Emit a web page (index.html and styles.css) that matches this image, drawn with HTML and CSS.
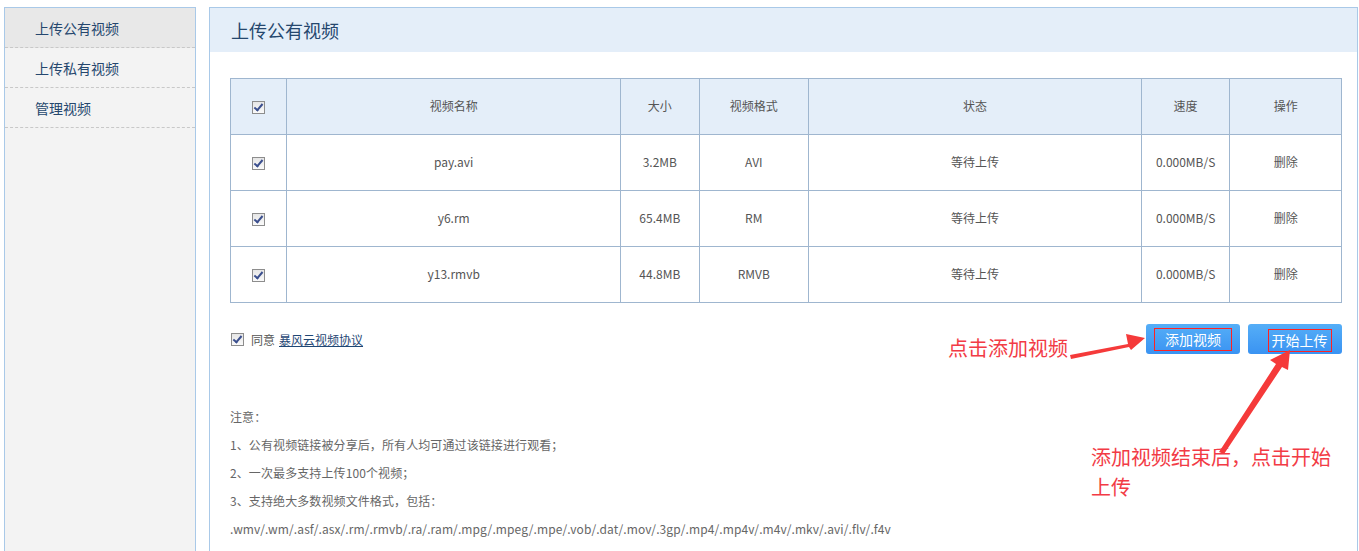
FILE: index.html
```html
<!DOCTYPE html>
<html lang="zh-CN">
<head>
    <meta charset="UTF-8">
    <title>上传公有视频</title>
    <link rel="stylesheet" href="styles.css">
</head>
<body>

<div class="page">

    <!-- Sidebar -->
    <div class="sidebar">
        <a class="active" href="#">上传公有视频</a>
        <a href="#">上传私有视频</a>
        <a href="#">管理视频</a>
    </div>

    <!-- Main panel -->
    <div class="main">
        <div class="main-head">上传公有视频</div>

        <div class="main-body">
            <table class="video-table">
                <tr>
                    <th class="col-check"><span class="check"></span></th>
                    <th class="col-name">视频名称</th>
                    <th class="col-size">大小</th>
                    <th class="col-format">视频格式</th>
                    <th class="col-state">状态</th>
                    <th class="col-speed">速度</th>
                    <th class="col-op">操作</th>
                </tr>
                <tr>
                    <td><span class="check"></span></td>
                    <td>pay.avi</td>
                    <td>3.2MB</td>
                    <td>AVI</td>
                    <td>等待上传</td>
                    <td>0.000MB/S</td>
                    <td>删除</td>
                </tr>
                <tr>
                    <td><span class="check"></span></td>
                    <td>y6.rm</td>
                    <td>65.4MB</td>
                    <td>RM</td>
                    <td>等待上传</td>
                    <td>0.000MB/S</td>
                    <td>删除</td>
                </tr>
                <tr>
                    <td><span class="check"></span></td>
                    <td>y13.rmvb</td>
                    <td>44.8MB</td>
                    <td>RMVB</td>
                    <td>等待上传</td>
                    <td>0.000MB/S</td>
                    <td>删除</td>
                </tr>
            </table>

            <div class="actions">
                <div class="agree">
                    <span class="check"></span>
                    <span>同意</span>
                    <a href="#">暴风云视频协议</a>
                </div>
                <div class="buttons">
                    <button class="btn"><span class="mark">添加视频</span></button>
                    <button class="btn"><span class="mark mark-tight">开始上传</span></button>
                </div>
            </div>

            <div class="notes">
                <p>注意：</p>
                <p>1、公有视频链接被分享后，所有人均可通过该链接进行观看；</p>
                <p>2、一次最多支持上传100个视频；</p>
                <p>3、支持绝大多数视频文件格式，包括：</p>
                <p>.wmv/.wm/.asf/.asx/.rm/.rmvb/.ra/.ram/.mpg/.mpeg/.mpe/.vob/.dat/.mov/.3gp/.mp4/.mp4v/.m4v/.mkv/.avi/.flv/.f4v</p>
            </div>
        </div>
    </div>
</div>

<!-- red annotations drawn over the screenshot -->
<svg class="arrows" width="1359" height="551" viewBox="0 0 1359 551">
    <polygon fill="#f53a3a" points="1070,355 1128,344 1126,334 1145,338 1131,350 1129,347 1071,359"/>
    <polygon fill="#f53a3a" points="1219,452 1276,364 1270,360 1290,350 1288,370 1282,367 1224,454"/>
</svg>
<div class="note-a">点击添加视频</div>
<div class="note-b">添加视频结束后，点击开始上传</div>

</body>
</html>
```

FILE: styles.css
```css
body, html {
    margin: 0;
    height: 100%;
    overflow: hidden;
    background-color: #fff;
    font-family: "Noto Sans CJK SC", "Liberation Sans", sans-serif;
    color: #555;
}

.page {
    display: flex;
    gap: 13px;
    height: 100%;
    box-sizing: border-box;
    padding: 7px 1px 0 4px;
}

/* Sidebar */
.sidebar {
    width: 192px;
    box-sizing: border-box;
    background-color: #f3f3f3;
    border: 1px solid #a9c9e8;
    border-bottom: none;
}

.sidebar a {
    display: block;
    height: 39px;
    line-height: 41px;
    padding-left: 30px;
    font-size: 14px;
    color: #25476e;
    text-decoration: none;
    border-bottom: 1px dashed #c8c8c8;
}

.sidebar a.active {
    background-color: #e8e8e8;
}

/* Main panel */
.main {
    flex: 1;
    border: 1px solid #a9c9e8;
    border-bottom: none;
}

.main-head {
    height: 44px;
    line-height: 44px;
    padding-left: 21px;
    background-color: #e4eef9;
    font-size: 18px;
    color: #25476e;
}

.main-body {
    padding: 26px 15px 0 20px;
}

.video-table {
    width: 1112px;
    border-collapse: collapse;
    font-size: 12px;
    color: #555;
}

.video-table th,
.video-table td {
    height: 56px;
    padding: 0 0 3px;
    box-sizing: border-box;
    border: 1px solid #9fb6cf;
    text-align: center;
    font-weight: normal;
}

.video-table th {
    background-color: #e4eef9;
}

.col-check { width: 56px; }
.col-name { width: 332px; }
.col-size { width: 78px; }
.col-format { width: 109px; }
.col-state { width: 331px; }
.col-speed { width: 88px; }
.col-op { width: 111px; }

/* fake checkbox */
.check {
    display: inline-block;
    width: 11px;
    height: 11px;
    border: 1px solid #8d8d8d;
    background: linear-gradient(#e6e6e6, #fafafa);
    vertical-align: middle;
    position: relative;
}

.check::after {
    content: "";
    position: absolute;
    left: 3px;
    top: 0px;
    width: 3px;
    height: 7px;
    border: solid #3b4f8e;
    border-width: 0 2px 2px 0;
    transform: rotate(40deg);
}

.actions {
    display: flex;
    justify-content: space-between;
    align-items: center;
    margin-top: 21px;
}

.agree {
    display: flex;
    align-items: center;
    gap: 7px;
    font-size: 12px;
    padding-left: 1px;
}

.agree a {
    color: #1f4775;
    margin-left: -3px;
}

.buttons {
    display: flex;
    gap: 8px;
}

.btn {
    width: 94px;
    height: 30px;
    padding: 0;
    border: none;
    border-radius: 3px;
    background: linear-gradient(#55aef7, #3a93f2);
    color: #fff;
    font-family: "Noto Sans CJK SC", sans-serif;
    font-size: 14px;
    display: flex;
    align-items: center;
    justify-content: center;
}

.mark {
    display: inline-block;
    line-height: 21px;
    padding: 0 10px;
    border: 1px solid #f22;
}

.mark-tight {
    padding: 0 3px;
    margin-left: 9px;
    margin-top: 2px;
}

.notes {
    margin-top: 49px;
    font-size: 12px;
    color: #666;
    letter-spacing: 0.1px;
}

.notes p {
    margin: 0;
    line-height: 28px;
}

/* annotations */
.arrows {
    position: absolute;
    top: 0;
    left: 0;
    pointer-events: none;
}

.note-a,
.note-b {
    position: absolute;
    color: #f23b45;
    font-size: 20px;
    line-height: 30px;
}

.note-a {
    left: 948px;
    top: 333px;
}

.note-b {
    left: 1091px;
    top: 442px;
    width: 258px;
}
```
